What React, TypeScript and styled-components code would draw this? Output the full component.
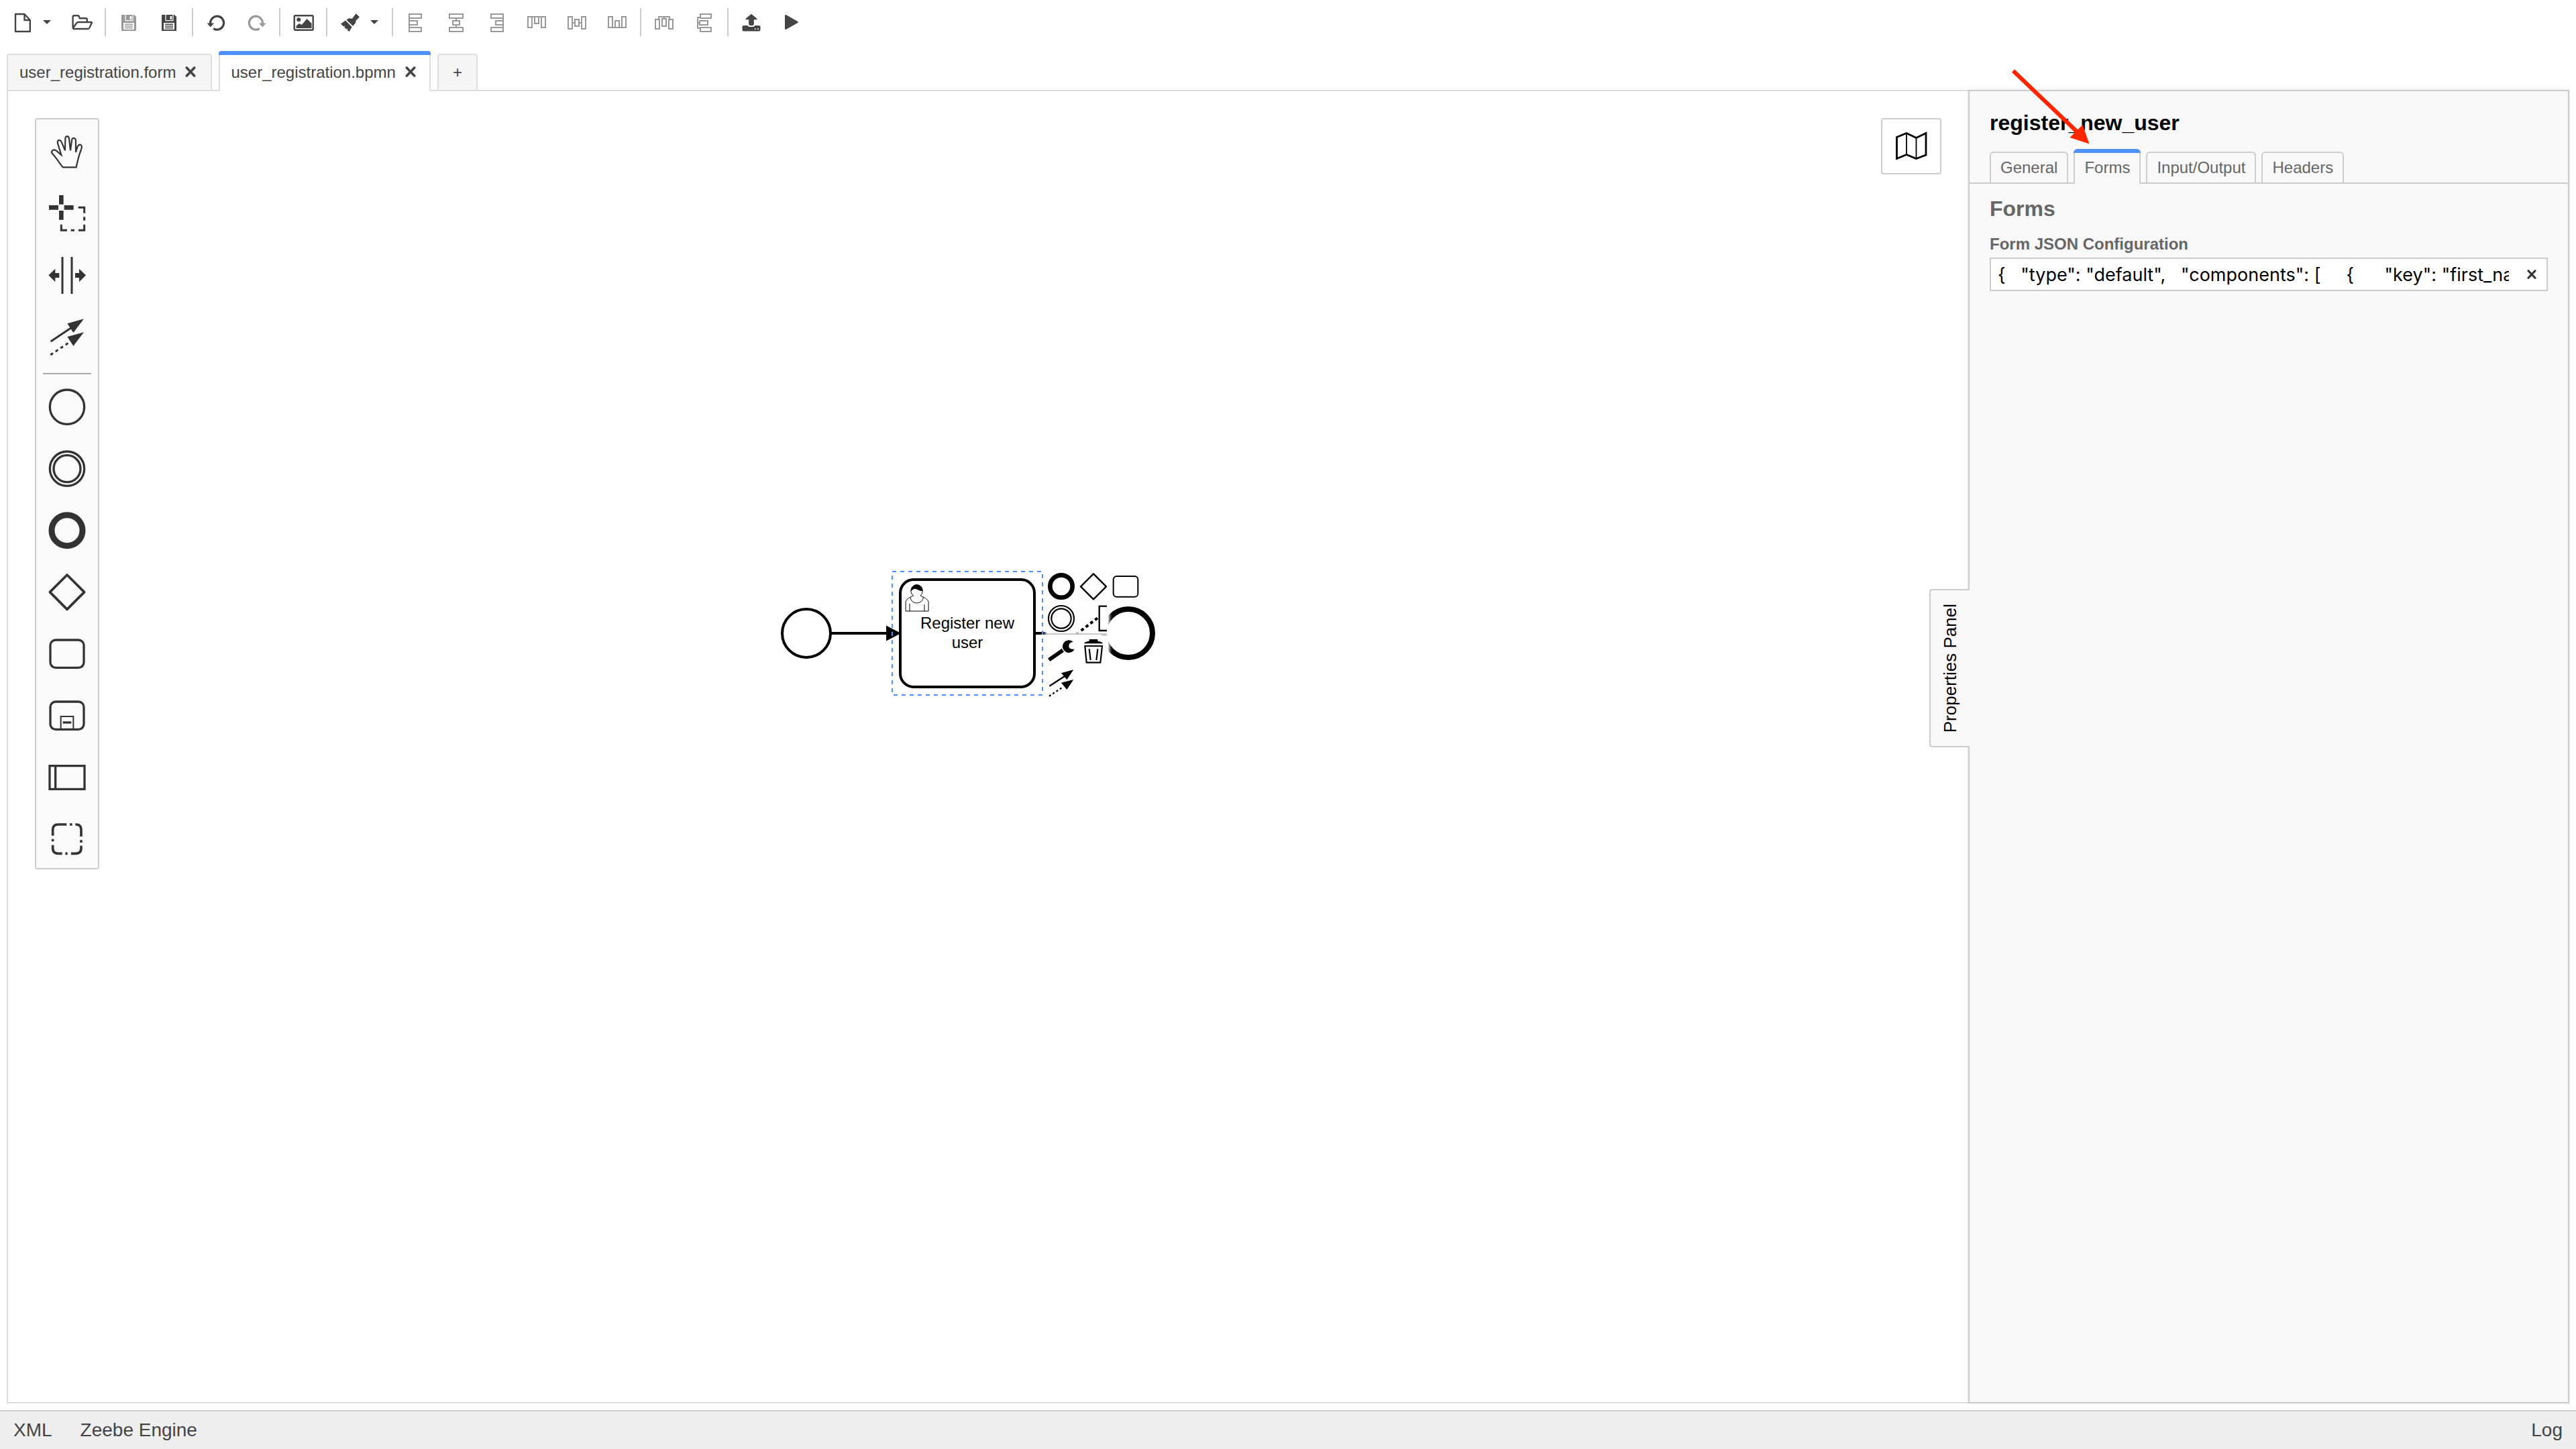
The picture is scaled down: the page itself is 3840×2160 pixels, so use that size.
import React, { useState } from 'react';
import styled, { createGlobalStyle, css } from 'styled-components';

const GlobalStyle = createGlobalStyle`
  *, *::before, *::after { box-sizing: border-box; }
  body {
    margin: 0;
    background: #fff;
    color: #444;
    font-family: "Liberation Sans", Arial, sans-serif;
    font-size: 24px;
  }
  button, input { font: inherit; color: inherit; }
`;

const plainButton = css`
  margin: 0;
  padding: 0;
  border: 0;
  background: none;
  cursor: pointer;
`;

const Shell = styled.div`
  display: flex;
  flex-direction: column;
  min-height: 100vh;
`;

/* toolbar */

const Toolbar = styled.header`
  display: flex;
  align-items: center;
  height: 66px;
  padding-left: 4px;
`;

const ToolButton = styled.button<{ $narrow?: boolean }>`
  ${plainButton}
  display: flex;
  align-items: center;
  justify-content: ${(p) => (p.$narrow ? 'flex-start' : 'center')};
  width: ${(p) => (p.$narrow ? 28 : 60)}px;
  height: 48px;
  color: #444;
  &:disabled { color: #999; cursor: default; }
`;

const ToolSeparator = styled.span`
  width: 2px;
  height: 42px;
  margin: 0 4px;
  background: #ccc;
`;

const Icon = styled.svg<{ $size: number }>`
  display: block;
  flex: none;
  width: ${(p) => p.$size}px;
  height: ${(p) => p.$size}px;
`;

/* file tabs */

const FileTabs = styled.nav`
  display: flex;
  align-items: flex-end;
  gap: 10px;
  height: 68px;
  padding: 0 10px;
`;

const FileTab = styled.div<{ $active?: boolean }>`
  display: flex;
  align-items: center;
  gap: 14px;
  height: 54px;
  padding: 0 22px 0 17px;
  border: 2px solid #ddd;
  border-bottom: 0;
  border-radius: 4px 4px 0 0;
  background: #f5f5f5;
  ${(p) =>
    p.$active &&
    css`
      position: relative;
      z-index: 1;
      height: 60px;
      margin-bottom: -2px;
      padding: 6px 20px 2px 16px;
      border-top: 0;
      background: #fff;
      &::before {
        content: '';
        position: absolute;
        top: 0;
        left: -2px;
        right: -2px;
        height: 6px;
        border-radius: 4px 4px 0 0;
        background: #4d90ff;
      }
    `}
`;

const TabName = styled.button`
  ${plainButton}
  line-height: 28px;
`;

const CloseButton = styled.button`
  ${plainButton}
  padding-bottom: 2px;
`;

const NewTab = styled.button`
  ${plainButton}
  display: flex;
  align-items: center;
  justify-content: center;
  width: 60px;
  height: 54px;
  border: 2px solid #ddd;
  border-bottom: 0;
  border-radius: 4px 4px 0 0;
  background: #f5f5f5;
`;

/* workspace */

const Workspace = styled.main`
  display: flex;
  flex: 1;
  min-height: 1300px;
  margin: 0 10px 10px;
`;

const Canvas = styled.section`
  position: relative;
  flex: 1;
  min-width: 0;
  border: 2px solid #ddd;
  border-right: 0;
  overflow: hidden;
`;

const Palette = styled.div`
  position: absolute;
  top: 40px;
  left: 40px;
  display: flex;
  flex-direction: column;
  width: 96px;
  border: 2px solid #ccc;
  border-radius: 4px;
  background: #fafafa;
`;

const PaletteButton = styled.button`
  ${plainButton}
  display: flex;
  align-items: center;
  justify-content: center;
  height: 92px;
  padding-top: 4px;
  color: #333;
`;

const PaletteSeparator = styled.hr`
  width: 72px;
  height: 2px;
  margin: 10px auto 0;
  border: 0;
  background: #aaa;
`;

const MapButton = styled.button`
  ${plainButton}
  position: absolute;
  top: 40px;
  right: 40px;
  display: flex;
  align-items: center;
  justify-content: center;
  width: 90px;
  height: 84px;
  border: 2px solid #ccc;
  border-radius: 4px;
  background: #fff;
  color: #000;
`;

const Diagram = styled.svg`
  position: absolute;
  left: 1138px;
  top: 704px;
  width: 590px;
  height: 210px;
  font-family: "Liberation Sans", Arial, sans-serif;
  font-size: 24px;
`;

const ContextPad = styled.div`
  position: absolute;
  left: 1548px;
  top: 716px;
  display: grid;
  grid-template-columns: repeat(3, 44px);
  grid-auto-rows: 44px;
  gap: 4px;
`;

const PadButton = styled.button<{ $col: number; $row: number }>`
  ${plainButton}
  grid-column: ${(p) => p.$col};
  grid-row: ${(p) => p.$row};
  background: #fefefe;
  box-shadow: 0 0 4px 2px #fefefe;
  color: #000;
`;

/* properties panel */

const Panel = styled.aside`
  position: relative;
  width: 896px;
  flex: none;
  border: 2px solid #ccc;
  background: #f8f8f8;
  box-shadow: 0 0 4px rgba(0, 0, 0, 0.12);
  color: #666;
`;

const PanelToggle = styled.button`
  ${plainButton}
  position: absolute;
  left: -60px;
  top: calc(50% - 235px);
  display: flex;
  align-items: center;
  justify-content: center;
  width: 60px;
  height: 236px;
  border: 2px solid #ccc;
  border-right: 0;
  border-radius: 4px 0 0 4px;
  background: #f8f8f8;
  color: #000;
  font-size: 26px;
`;

const VerticalText = styled.span`
  writing-mode: vertical-rl;
  transform: rotate(180deg);
  line-height: 30px;
`;

const PanelHeader = styled.div`
  padding: 28px 30px 0;
  border-bottom: 2px solid #ccc;
`;

const PanelTitle = styled.h1`
  margin: 0 0 20px;
  color: #000;
  font-size: 32px;
  line-height: 38px;
`;

const PanelTabs = styled.div`
  display: flex;
  align-items: flex-end;
  gap: 8px;
  height: 50px;
`;

const PanelTab = styled.button<{ $active: boolean }>`
  ${plainButton}
  height: 46px;
  padding: 0 14px;
  border: 2px solid #ccc;
  border-bottom: 0;
  border-radius: 6px 6px 0 0;
  line-height: 28px;
  ${(p) =>
    p.$active &&
    css`
      position: relative;
      height: 52px;
      margin-bottom: -2px;
      padding: 4px 14px 0;
      border-top: 0;
      background: #f8f8f8;
      &::before {
        content: '';
        position: absolute;
        top: 0;
        left: -2px;
        right: -2px;
        height: 6px;
        border-radius: 6px 6px 0 0;
        background: #4d90ff;
      }
    `}
`;

const PanelBody = styled.div`
  padding: 18px 30px;
`;

const GroupTitle = styled.h2`
  margin: 0 0 20px;
  font-size: 32px;
  line-height: 38px;
`;

const FieldLabel = styled.label`
  display: block;
  margin-bottom: 6px;
  font-weight: bold;
  line-height: 28px;
`;

const Field = styled.div`
  position: relative;
`;

const TextInput = styled.input`
  display: block;
  width: 100%;
  height: 50px;
  padding: 0 56px 0 10px;
  border: 2px solid #ccc;
  border-radius: 0;
  outline: 0;
  background: #fff;
  color: #000;
  font-family: Inter, "Liberation Sans", sans-serif;
  font-size: 27px;
`;

const ClearButton = styled.button`
  ${plainButton}
  position: absolute;
  top: 0;
  right: 2px;
  display: flex;
  align-items: center;
  justify-content: center;
  width: 44px;
  height: 50px;
  color: #333;
`;

const Pointer = styled.svg`
  position: absolute;
  left: 60px;
  top: -34px;
  width: 124px;
  height: 116px;
  pointer-events: none;
`;

/* status bar */

const StatusBar = styled.footer`
  display: flex;
  align-items: center;
  gap: 42px;
  height: 58px;
  padding: 0 20px;
  border-top: 2px solid #ccc;
  background: #eee;
`;

const StatusItem = styled.button<{ $end?: boolean }>`
  ${plainButton}
  margin-left: ${(p) => (p.$end ? 'auto' : '0')};
  font-size: 28px;
  line-height: 32px;
`;

const line = { fill: 'none', stroke: 'currentColor' };

const Cross = ({ size = 16 }: { size?: number }) => (
  <Icon $size={size} viewBox="0 0 16 16" {...line} strokeWidth="3.6" strokeLinecap="round">
    <path d="M2.3 2 13.7 14M13.7 2 2.3 14" />
  </Icon>
);

const floppy = (
  <>
    <path fill="currentColor" d="M5 5h19l3 3v21H5z" />
    <path fill="none" stroke="#fff" strokeWidth="1.2" d="M11 5v8.6h11V5" />
    <path fill="#fff" d="M17.6 7h2.6v5h-2.6zM8 17h16v10H8z" />
    <path {...line} strokeWidth="1.5" d="M10 19.2h12M10 22h12M10 24.8h12" />
  </>
);

const turn = (
  <>
    <path {...line} strokeWidth="3.2" d="M7.6 19v-2a10 10 0 1 1 4.6 8.6" />
    <path fill="currentColor" d="M2.5 17.6h10.6l-5.4 6z" />
  </>
);

type Tool = { label: string; off?: boolean; narrow?: boolean; art: React.ReactNode } | null;

const outline = (d: string) => <path {...line} strokeWidth="2" d={d} />;

const caret = <path fill="currentColor" d="M0 13h12l-6 6z" />;

const tools: Tool[] = [
  {
    label: 'Create diagram',
    art: <path {...line} strokeWidth="2.4" strokeLinejoin="round" d="M5 4h13.5l8.3 9v17H5zM18.5 4v9h8.3" />,
  },
  { label: 'More file types', narrow: true, art: caret },
  {
    label: 'Open diagram',
    art: (
      <path
        {...line}
        strokeWidth="2.4"
        strokeLinejoin="round"
        d="M3.5 25.5 2.6 24V8q0-1.8 1.8-1.8H10q1.5 0 2 1.5l.6 2.6H22q1.8 0 1.8 1.8V16M4 26q-1.5-.3-.8-1.8L8 17.5Q9 16 10.8 16H29.5q2 0 1 1.8L27.3 24.5Q26.5 26 25 26z"
      />
    ),
  },
  null,
  { label: 'Save diagram', off: true, art: floppy },
  { label: 'Save diagram as', art: floppy },
  null,
  { label: 'Undo', art: turn },
  { label: 'Redo', off: true, art: <g transform="matrix(-1 0 0 1 33 0)">{turn}</g> },
  null,
  {
    label: 'Export as image',
    art: (
      <>
        <rect x="2.7" y="6.2" width="28" height="21.6" rx="1.5" {...line} strokeWidth="2.4" />
        <path fill="currentColor" d="M5.6 25v-3.5L10 18l3.8 2L21.5 11l7 7v7z" />
        <circle cx="9.3" cy="12.3" r="3" fill="currentColor" />
      </>
    ),
  },
  null,
  {
    label: 'Set color',
    art: (
      <path
        fill="currentColor"
        d="M24.6 3.3 30 8.3 24.3 14q.6 2-.6 3.6l-3.7 4.2L10.3 12.5l2.6-1.6q1.5-.8 3.4-.4l2.7.3zM9 13.6l9.7 9.6-4.3 7.1-2.9-2.7 1-2-2.3.8-2.8-2.7 1-2.2-2.3 1L2 18.6z"
      />
    ),
  },
  { label: 'More colors', narrow: true, art: caret },
  null,
  { label: 'Align left', off: true, art: outline('M6 4h18v6H6zM6 14h12v6H6zM6 24h18v6H6zM6 4v26') },
  { label: 'Align center', off: true, art: outline('M6 4h20v6H6zM11 14h10v6H11zM6 24h20v6H6zM16 10v4M16 20v4') },
  { label: 'Align right', off: true, art: outline('M8 4h18v6H8zM15 14h11v6H15zM8 24h18v6H8zM26 4v26') },
  { label: 'Align top', off: true, art: outline('M3 8h6v16H3zM13 8h6v10h-6zM23 8h6v16h-6zM3 8h26') },
  { label: 'Align middle', off: true, art: outline('M3 8h6v18H3zM13 12h6v10h-6zM23 8h6v18h-6zM9 17h4M19 17h4') },
  { label: 'Align bottom', off: true, art: outline('M3 8h6v16H3zM13 14h6v10h-6zM23 8h6v16h-6zM3 24h26') },
  null,
  {
    label: 'Distribute horizontally',
    off: true,
    art: outline('M3 12h6v14H3zM13 11h6v11h-6zM23 12h6v14h-6zM8 12V8h16v4M16 8v3'),
  },
  {
    label: 'Distribute vertically',
    off: true,
    art: outline('M10 4h16v6H10zM9 14h12v6H9zM10 24h16v6H10zM10 9H6v16h4M6 17h3'),
  },
  null,
  {
    label: 'Deploy diagram',
    art: (
      <>
        <path
          fill="currentColor"
          d="M16 3.7 24.6 11q.4 1-.8 1.2h-4V19q0 2-2 2h-3.6q-2 0-2-2v-6.8h-4q-1.2-.2-.8-1.2z"
        />
        <path fill="currentColor" d="M4.5 21H10.5q1 2 3 2h5q2 0 3-2h6q2 0 2 2v4.5q0 2-2 2h-23q-2 0-2-2V23q0-2 2-2z" />
        <circle cx="21.7" cy="26.2" r="1" fill="#fff" />
        <circle cx="26" cy="26.2" r="1" fill="#fff" />
      </>
    ),
  },
  {
    label: 'Start process instance',
    art: <path fill="currentColor" d="M6 6.5q0-2 2-1.2L25.2 15q1.5 1 0 2L8 26.8q-2 .8-2-1.2z" />,
  },
];

/* Palette entries: art is drawn in thirds of a pixel, around (300, cy). */
const paletteTop = [
  {
    label: 'Activate the hand tool',
    cy: 198,
    art: (
      <path
        {...line}
        strokeWidth="6.5"
        d="M281 268H341C347 238 351 218 363 189C368 176 366 168 358 167C349 166 346 176 339 201V150C338 134 322 133 321 148L315 193L309 140C307 126 292 126 292 141L291 193L275 155C267 140 255 147 258 161L274 213L251 193C237 184 226 198 234 207C254 228 262 245 281 268Z"
      />
    ),
  },
  {
    label: 'Activate the lasso tool',
    cy: 475,
    art: (
      <>
        <path fill="currentColor" d="M264 394h20v41h-20zM264 463h20v41h-20zM219 439h42v20h-42zM287 439h42v20h-42z" />
        <path {...line} strokeWidth="9" d="M350 449H377V474M377 491v16M377 525V551H351M333 551H317M300 551H274V525" />
      </>
    ),
  },
  {
    label: 'Activate the create/remove space tool',
    cy: 750,
    art: (
      <>
        <path {...line} strokeWidth="9" d="M279 669V834M321 669V834" />
        <path fill="currentColor" d="M217 751L247 722V741H265V762H247V781ZM384 751L354 722V741H336V762H354V781Z" />
      </>
    ),
  },
  {
    label: 'Activate the global connect tool',
    cy: 1026,
    art: (
      <>
        <path {...line} strokeWidth="9" d="M227 1047L320 985" />
        <path {...line} strokeWidth="9" strokeDasharray="13 14" d="M226 1107L310 1051" />
        <path fill="currentColor" d="M375 946L301 967L328 1008ZM375 1006L301 1026L328 1067Z" />
      </>
    ),
  },
];

const paletteShapes = [
  { label: 'Create StartEvent', cy: 198, art: <circle cx="300" cy="200" r="77" {...line} strokeWidth="10" /> },
  {
    label: 'Create Intermediate/Boundary Event',
    cy: 474,
    art: (
      <g {...line} strokeWidth="10">
        <circle cx="300" cy="476" r="77" />
        <circle cx="300" cy="476" r="60" />
      </g>
    ),
  },
  { label: 'Create EndEvent', cy: 750, art: <circle cx="300" cy="752" r="69" {...line} strokeWidth="27" /> },
  {
    label: 'Create Gateway',
    cy: 1026,
    art: <path {...line} strokeWidth="11" strokeLinejoin="round" d="M300 951L377 1028L300 1105L223 1028Z" />,
  },
  {
    label: 'Create Task',
    cy: 162,
    art: <rect x="225" y="102" width="150" height="124" rx="24" {...line} strokeWidth="10" />,
  },
  {
    label: 'Create expanded SubProcess',
    cy: 438,
    art: (
      <g {...line} strokeWidth="10">
        <rect x="225" y="378" width="150" height="124" rx="24" />
        <path strokeWidth="6" d="M272 500V444H328V500" />
        <path d="M281 471H319" />
      </g>
    ),
  },
  {
    label: 'Create Pool/Participant',
    cy: 714,
    art: <path {...line} strokeWidth="10" d="M222 665H378V769H222ZM248 665V769" />,
  },
  {
    label: 'Create Group',
    cy: 990,
    art: (
      <path
        {...line}
        strokeWidth="11"
        d="M236 977V951Q236 927 260 927H298M312 927H323M337 927H340Q363 927 363 951V981M363 997V1008M363 1022V1033Q363 1057 339 1057H318M302 1057H292M278 1057H260Q236 1057 236 1033V1019M236 1003V992"
      />
    ),
  },
];

/* Context pad entries: art is drawn in thirds of a pixel on a 144 unit raster. */
const padEntries = [
  { label: 'Append EndEvent', col: 1, row: 1, art: <circle cx="156" cy="132" r="50" {...line} strokeWidth="20" /> },
  {
    label: 'Append Gateway',
    col: 2,
    row: 1,
    art: <path {...line} strokeWidth="7" strokeLinejoin="round" d="M300 76L357 133L300 190L243 133Z" />,
  },
  {
    label: 'Append Task',
    col: 3,
    row: 1,
    art: <rect x="389" y="87" width="110" height="92" rx="15" {...line} strokeWidth="6" />,
  },
  {
    label: 'Append Intermediate/Boundary Event',
    col: 1,
    row: 2,
    art: (
      <g {...line} strokeWidth="6.5">
        <circle cx="156" cy="276" r="57" />
        <circle cx="156" cy="276" r="44" />
      </g>
    ),
  },
  {
    label: 'Append TextAnnotation',
    col: 2,
    row: 2,
    art: (
      <g {...line}>
        <path strokeWidth="7" d="M360 221H326V330H360" />
        <path strokeWidth="12" strokeDasharray="14 12" d="M245 330L318 274" />
      </g>
    ),
  },
  {
    label: 'Change type',
    col: 1,
    row: 3,
    art: (
      <>
        <path {...line} strokeWidth="17" d="M101 461L166 416" />
        <circle cx="190" cy="401" r="32" fill="#fefefe" />
        <path fill="currentColor" d="M209 381Q190 381 190 401Q191 415 215 413A28 28 0 1 1 207 379Z" />
      </>
    ),
  },
  {
    label: 'Remove',
    col: 2,
    row: 3,
    art: (
      <>
        <path fill="currentColor" d="M257 388Q262 379 281 377V369H319V377Q338 379 343 388Z" />
        <path {...line} strokeWidth="6.5" d="M262 399H339L331 473H269ZM281 412L287 462M319 412L313 462" />
      </>
    ),
  },
  {
    label: 'Connect using Sequence/MessageFlow or Association',
    col: 1,
    row: 4,
    art: (
      <>
        <path {...line} strokeWidth="7" d="M103 578L170 535" />
        <path {...line} strokeWidth="7" strokeDasharray="9 10" d="M102 623L166 581" />
        <path fill="currentColor" d="M211 505L156 520L181 550ZM211 549L156 563L181 594Z" />
      </>
    ),
  },
];

const formJson =
  '{   "type": "default",   "components": [     {      "key": "first_name",      "label": "First name",      "type": "textfield"     }   ] }';

const PaletteEntry = ({ label, cy, art }: { label: string; cy: number; art: React.ReactNode }) => (
  <PaletteButton aria-label={label} title={label}>
    <Icon $size={60} viewBox={`210 ${cy - 90} 180 180`}>
      {art}
    </Icon>
  </PaletteButton>
);

export default function App() {
  const [tab, setTab] = useState('Forms');
  const [config, setConfig] = useState(formJson);

  return (
    <Shell>
      <GlobalStyle />

      <Toolbar>
        {tools.map((tool, i) =>
          tool ? (
            <ToolButton key={i} aria-label={tool.label} title={tool.label} disabled={tool.off} $narrow={tool.narrow}>
              <Icon $size={32} viewBox="0 0 32 32">
                {tool.art}
              </Icon>
            </ToolButton>
          ) : (
            <ToolSeparator key={i} />
          ),
        )}
      </Toolbar>

      <FileTabs>
        <FileTab>
          <TabName>user_registration.form</TabName>
          <CloseButton aria-label="Close user_registration.form">
            <Cross />
          </CloseButton>
        </FileTab>
        <FileTab $active>
          <TabName>user_registration.bpmn</TabName>
          <CloseButton aria-label="Close user_registration.bpmn">
            <Cross />
          </CloseButton>
        </FileTab>
        <NewTab>+</NewTab>
      </FileTabs>

      <Workspace>
        <Canvas>
          <Diagram viewBox="1150 840 590 210">
            <g fill="none" stroke="#000" strokeWidth="4">
              <circle cx="1202" cy="944" r="36" />
              <path d="M1238 944H1330M1542 944H1646" />
              <circle cx="1682" cy="944" r="36" strokeWidth="8" fill="#fff" />
            </g>
            <path d="M1321 932.5L1343 944L1321 955.5Z" />
            <rect x="1342" y="864" width="200" height="160" rx="20" fill="#fff" stroke="#000" strokeWidth="4" />
            <g transform="translate(1342 864) scale(2)" fill="#fff" stroke="#000" strokeWidth="0.5">
              <path d="m15 12c.909-.845 1.594-2.049 1.594-3.385 0-2.554-1.805-4.622-4.357-4.622-2.552 0-4.288 2.068-4.288 4.622 0 1.348.974 2.562 1.896 3.405-.529.187-5.669 2.097-5.794 4.756v6.718h17v-6.718c0-2.298-5.528-4.595-6.051-4.776zm-8 6l0 5.5m11 0l0-5" />
              <path d="m17.162 13.009c0 2.447-2.158 4.431-4.821 4.431-2.665 0-4.822-1.981-4.822-4.431" />
              <path
                fill="#000"
                d="m8.1 8.2c0 0 2.251-2.358 4.274-1.177 2.024 1.181 4.221 1.537 4.124.965-.098-.57-.117-3.791-4.191-4.136-3.572.001-4.208 3.67-4.207 4.348z"
              />
            </g>
            <text x="1442" y="937" textAnchor="middle">
              Register new
            </text>
            <text x="1442" y="966" textAnchor="middle">
              user
            </text>
            <rect
              x="1330"
              y="852"
              width="224"
              height="184"
              fill="none"
              stroke="#4d90ff"
              strokeWidth="2"
              strokeDasharray="6 6"
            />
          </Diagram>

          <ContextPad>
            {padEntries.map((entry) => (
              <PadButton key={entry.label} $col={entry.col} $row={entry.row} aria-label={entry.label} title={entry.label}>
                <Icon $size={44} viewBox={`${entry.col * 144 - 54} ${entry.row * 144 - 78} 132 132`}>
                  {entry.art}
                </Icon>
              </PadButton>
            ))}
          </ContextPad>

          <Palette>
            {paletteTop.map((entry) => (
              <PaletteEntry key={entry.label} {...entry} />
            ))}
            <PaletteSeparator />
            {paletteShapes.map((entry) => (
              <PaletteEntry key={entry.label} {...entry} />
            ))}
          </Palette>

          <MapButton aria-label="Toggle minimap">
            <Icon $size={48} viewBox="0 0 48 48" {...line}>
              <path strokeWidth="2.8" d="M2.5 10.5 17 4.5 31.5 11.5 46 4.5V37L31.5 42.5 17 36.5 2.5 42.5Z" />
              <path strokeWidth="1.8" d="M17 4.5V36.5M31.5 11V42.5" />
            </Icon>
          </MapButton>
        </Canvas>

        <Panel>
          <PanelToggle>
            <VerticalText>Properties Panel</VerticalText>
          </PanelToggle>
          <PanelHeader>
            <PanelTitle>register_new_user</PanelTitle>
            <PanelTabs role="tablist">
              {['General', 'Forms', 'Input/Output', 'Headers'].map((name) => (
                <PanelTab
                  key={name}
                  role="tab"
                  aria-selected={tab === name}
                  $active={tab === name}
                  onClick={() => setTab(name)}
                >
                  {name}
                </PanelTab>
              ))}
            </PanelTabs>
          </PanelHeader>
          <PanelBody>
            <GroupTitle>Forms</GroupTitle>
            <FieldLabel htmlFor="form-json">Form JSON Configuration</FieldLabel>
            <Field>
              <TextInput id="form-json" value={config} onChange={(e) => setConfig(e.target.value)} />
              <ClearButton aria-label="Clear" onClick={() => setConfig('')}>
                <Cross size={14} />
              </ClearButton>
            </Field>
          </PanelBody>
          <Pointer viewBox="0 0 124 116" aria-hidden="true">
            <path d="M5 3.5L104 98" stroke="#ff2600" strokeWidth="6" />
            <path d="M118.5 112.5L108.5 84L89.5 103Z" fill="#ff2600" />
          </Pointer>
        </Panel>
      </Workspace>

      <StatusBar>
        <StatusItem>XML</StatusItem>
        <StatusItem>Zeebe Engine</StatusItem>
        <StatusItem $end>Log</StatusItem>
      </StatusBar>
    </Shell>
  );
}
